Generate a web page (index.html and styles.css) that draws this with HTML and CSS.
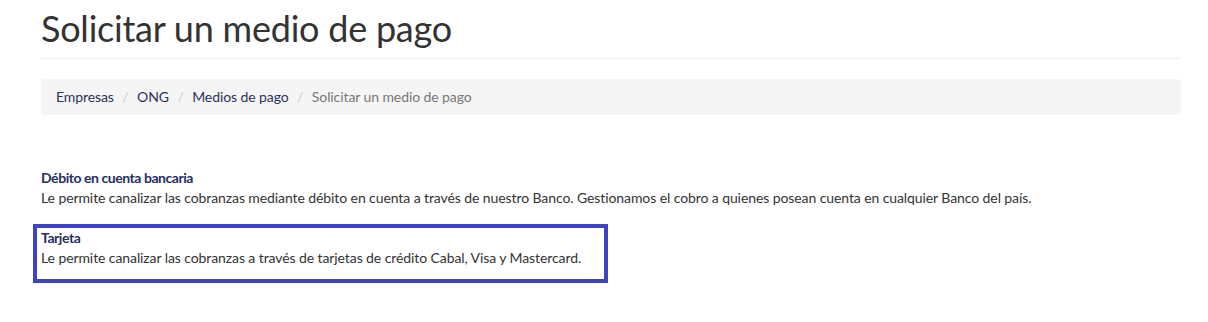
FILE: index.html
```html
<!DOCTYPE html>
<html lang="es">
<head>
<meta charset="utf-8">
<title>Solicitar un medio de pago</title>
<link rel="stylesheet" href="styles.css">
</head>
<body>
<div class="container">
  <h1 class="page-title">Solicitar un medio de pago</h1>
  <ol class="breadcrumb">
    <li><a href="#">Empresas</a></li>
    <li><a href="#">ONG</a></li>
    <li><a href="#">Medios de pago</a></li>
    <li class="active">Solicitar un medio de pago</li>
  </ol>
  <div class="products">
    <div class="product">
      <h4 class="product-title">Débito en cuenta bancaria</h4>
      <p class="product-text">Le permite canalizar las cobranzas mediante débito en cuenta a través de nuestro Banco. Gestionamos el cobro a quienes posean cuenta en cualquier Banco del país.</p>
    </div>
    <div class="product product-selected">
      <h4 class="product-title">Tarjeta</h4>
      <p class="product-text">Le permite canalizar las cobranzas a través de tarjetas de crédito Cabal, Visa y Mastercard.</p>
    </div>
  </div>
</div>
</body>
</html>
```

FILE: styles.css
```css
html, body {
  margin: 0;
  padding: 0;
  background: #ffffff;
}

body {
  font-family: Lato, "Open Sans", Arial, sans-serif;
  font-size: 14px;
  line-height: 20px;
  letter-spacing: -0.09px;
  color: #333333;
}

.container {
  width: 1140px;
  padding-left: 41px;
}

.page-title {
  margin: 9px 0 0;
  padding-bottom: 9px;
  border-bottom: 1px solid #eeeeee;
  font-size: 36px;
  line-height: 39.6px;
  font-weight: 400;
  letter-spacing: -0.23px;
  color: #333333;
}

.breadcrumb {
  list-style: none;
  margin: 20px 0 0;
  padding: 8px 15px;
  background: #f5f5f5;
  border-radius: 4px;
}

.breadcrumb li {
  display: inline-block;
}

.breadcrumb li + li::before {
  content: "/\00a0";
  padding: 0 5px;
  color: #cccccc;
}

.breadcrumb a {
  color: #2c3260;
  text-decoration: none;
}

.breadcrumb .active {
  color: #777777;
}

.products {
  margin-top: 53px;
}

.product-title {
  margin: 0;
  font-size: 14px;
  line-height: 20px;
  font-weight: 700;
  color: #262f62;
  letter-spacing: -0.45px;
}

.product-text {
  margin: 0 0 10px;
}

.product-selected {
  box-sizing: border-box;
  width: 575px;
  margin: 16px 0 0 -8px;
  padding: 0 0 11px 4px;
  border: 4px solid #3f43c2;
}

.product-selected .product-text {
  margin: 0;
}
```
